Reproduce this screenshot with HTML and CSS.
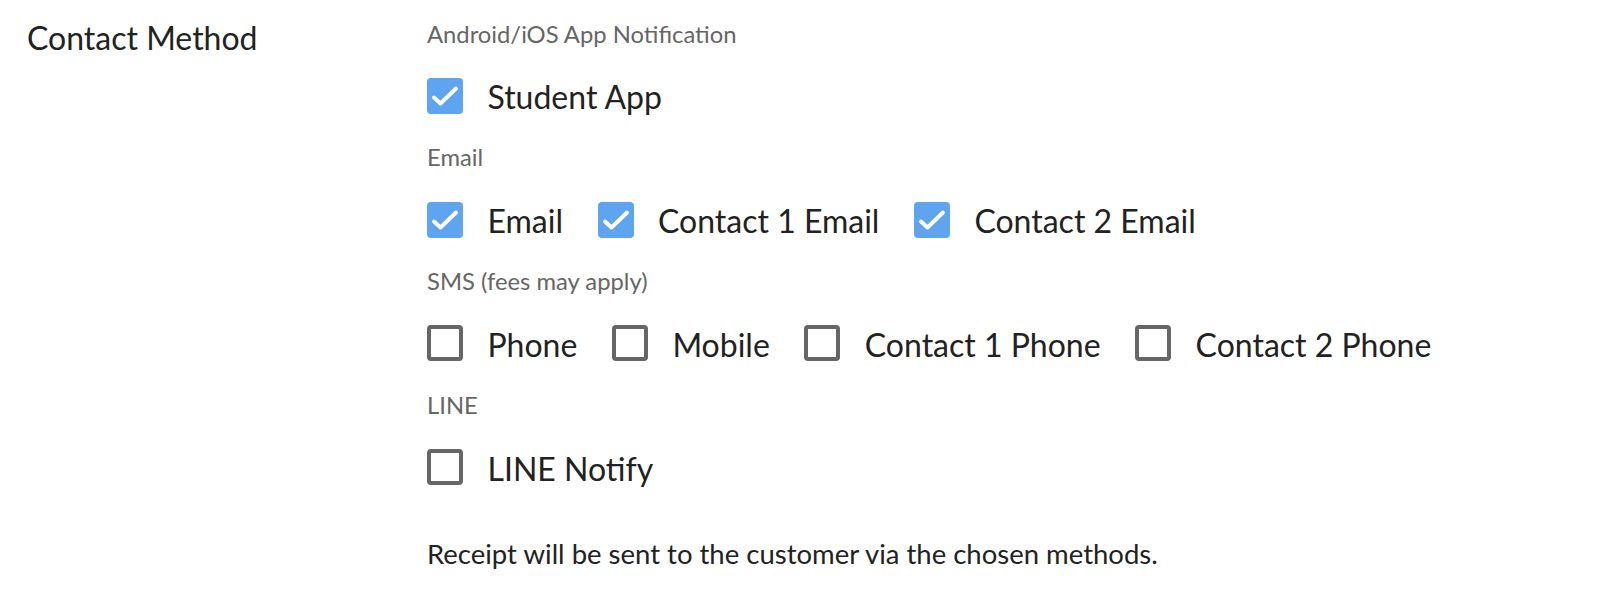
FILE: index.html
```html
<!DOCTYPE html>
<html lang="en">
<head>
<meta charset="utf-8">
<title>Contact Method</title>
<link rel="stylesheet" href="styles.css">
</head>
<body>
<div class="form-row">
  <div class="field-label">Contact Method</div>
  <div class="field-body">
    <div class="group-label">Android/iOS App Notification</div>
    <div class="options">
      <label class="option"><span class="box checked"><svg viewBox="0 0 36 36"><path d="M7 19.5l6.5 6L29 10.5"/></svg></span><span class="text">Student App</span></label>
    </div>
    <div class="group-label">Email</div>
    <div class="options">
      <label class="option"><span class="box checked"><svg viewBox="0 0 36 36"><path d="M7 19.5l6.5 6L29 10.5"/></svg></span><span class="text">Email</span></label>
      <label class="option"><span class="box checked"><svg viewBox="0 0 36 36"><path d="M7 19.5l6.5 6L29 10.5"/></svg></span><span class="text">Contact 1 Email</span></label>
      <label class="option"><span class="box checked"><svg viewBox="0 0 36 36"><path d="M7 19.5l6.5 6L29 10.5"/></svg></span><span class="text">Contact 2 Email</span></label>
    </div>
    <div class="group-label">SMS (fees may apply)</div>
    <div class="options">
      <label class="option"><span class="box"></span><span class="text">Phone</span></label>
      <label class="option"><span class="box"></span><span class="text">Mobile</span></label>
      <label class="option"><span class="box"></span><span class="text">Contact 1 Phone</span></label>
      <label class="option"><span class="box"></span><span class="text">Contact 2 Phone</span></label>
    </div>
    <div class="group-label">LINE</div>
    <div class="options">
      <label class="option"><span class="box"></span><span class="text">LINE Notify</span></label>
    </div>
    <p class="note">Receipt will be sent to the customer via the chosen methods.</p>
  </div>
</div>
</body>
</html>
```

FILE: styles.css
```css
* { box-sizing: border-box; }
html, body { margin: 0; padding: 0; background: #fff; }
body {
  font-family: Lato, "Open Sans", sans-serif;
  color: #222;
}
.form-row {
  display: flex;
  padding: 18.7px 0 0 27px;
}
.field-label {
  width: 400px;
  flex: none;
  font-size: 32px;
  line-height: 38px;
  color: #222;
}
.field-body {
  display: flex;
  flex-direction: column;
}
.group-label {
  font-size: 23.8px;
  line-height: 30px;
  color: #666;
  margin-bottom: 29.3px;
}
.options {
  display: flex;
  gap: 34.5px;
  height: 36px;
  margin-bottom: 28.4px;
}
.option {
  display: flex;
  align-items: center;
  gap: 24.5px;
}
.box {
  width: 36px;
  height: 36px;
  border: 4px solid #666;
  border-radius: 4px;
  flex: none;
  position: relative;
}
.box.checked {
  background: #5fa4f0;
  border-color: #5fa4f0;
}
.box svg {
  position: absolute;
  left: -4px;
  top: -4px;
  width: 36px;
  height: 36px;
  fill: none;
  stroke: #fff;
  stroke-width: 3.9;
  stroke-linecap: round;
  stroke-linejoin: round;
}
.text {
  font-size: 32px;
  line-height: 36px;
  padding-top: 3px;
  color: #222;
}
.note {
  margin: 22.8px 0 0;
  font-size: 27.5px;
  line-height: 36px;
  color: #222;
}
```
